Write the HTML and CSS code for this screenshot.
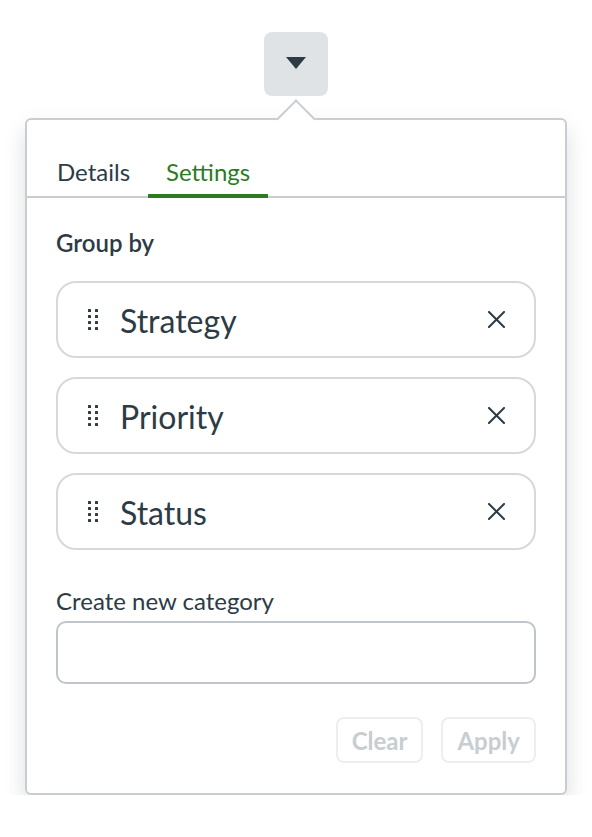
FILE: index.html
```html
<!DOCTYPE html>
<html lang="en">
<head>
<meta charset="utf-8">
<title>Group by settings</title>
<link rel="stylesheet" href="styles.css">
</head>
<body>
<div class="stage">
  <button class="trigger" type="button" aria-label="Toggle">
    <svg width="20" height="12" viewBox="0 0 20 12"><path d="M0 0 H20 L10 12 Z" fill="#2d3b45"/></svg>
  </button>
  <div class="popover">
    <span class="caret"></span>
    <div class="tablist">
      <div class="tab">Details</div>
      <div class="tab active">Settings</div>
    </div>
    <div class="panel">
      <div class="label strong">Group by</div>
      <div class="chips">
        <div class="chip">
          <svg class="handle" width="10" height="21" viewBox="0 0 10 21"><g fill="#2d3b45"><rect x="0" y="0" width="3" height="3" rx="0.6"/><rect x="7" y="0" width="3" height="3" rx="0.6"/><rect x="0" y="6" width="3" height="3" rx="0.6"/><rect x="7" y="6" width="3" height="3" rx="0.6"/><rect x="0" y="12" width="3" height="3" rx="0.6"/><rect x="7" y="12" width="3" height="3" rx="0.6"/><rect x="0" y="18" width="3" height="3" rx="0.6"/><rect x="7" y="18" width="3" height="3" rx="0.6"/></g></svg>
          <span class="chip-text">Strategy</span>
          <svg class="close" width="17" height="17" viewBox="0 0 17 17"><path d="M1 1 L16 16 M16 1 L1 16" stroke="#2d3b45" stroke-width="2" stroke-linecap="square"/></svg>
        </div>
        <div class="chip">
          <svg class="handle" width="10" height="21" viewBox="0 0 10 21"><g fill="#2d3b45"><rect x="0" y="0" width="3" height="3" rx="0.6"/><rect x="7" y="0" width="3" height="3" rx="0.6"/><rect x="0" y="6" width="3" height="3" rx="0.6"/><rect x="7" y="6" width="3" height="3" rx="0.6"/><rect x="0" y="12" width="3" height="3" rx="0.6"/><rect x="7" y="12" width="3" height="3" rx="0.6"/><rect x="0" y="18" width="3" height="3" rx="0.6"/><rect x="7" y="18" width="3" height="3" rx="0.6"/></g></svg>
          <span class="chip-text">Priority</span>
          <svg class="close" width="17" height="17" viewBox="0 0 17 17"><path d="M1 1 L16 16 M16 1 L1 16" stroke="#2d3b45" stroke-width="2" stroke-linecap="square"/></svg>
        </div>
        <div class="chip">
          <svg class="handle" width="10" height="21" viewBox="0 0 10 21"><g fill="#2d3b45"><rect x="0" y="0" width="3" height="3" rx="0.6"/><rect x="7" y="0" width="3" height="3" rx="0.6"/><rect x="0" y="6" width="3" height="3" rx="0.6"/><rect x="7" y="6" width="3" height="3" rx="0.6"/><rect x="0" y="12" width="3" height="3" rx="0.6"/><rect x="7" y="12" width="3" height="3" rx="0.6"/><rect x="0" y="18" width="3" height="3" rx="0.6"/><rect x="7" y="18" width="3" height="3" rx="0.6"/></g></svg>
          <span class="chip-text">Status</span>
          <svg class="close" width="17" height="17" viewBox="0 0 17 17"><path d="M1 1 L16 16 M16 1 L1 16" stroke="#2d3b45" stroke-width="2" stroke-linecap="square"/></svg>
        </div>
      </div>
      <label class="label field-label" for="newcat">Create new category</label>
      <input class="input" id="newcat" type="text">
      <div class="actions">
        <button class="btn" type="button" disabled>Clear</button>
        <button class="btn" type="button" disabled>Apply</button>
      </div>
    </div>
  </div>
</div>
</body>
</html>
```

FILE: styles.css
```css
* { box-sizing: border-box; }

html, body {
  margin: 0;
  padding: 0;
  background: #ffffff;
}

body {
  font-family: Lato, "Open Sans", "Liberation Sans", sans-serif;
  color: #2d3b45;
}

.stage {
  display: flex;
  flex-direction: column;
  align-items: center;
  padding-top: 32px;
}

.trigger {
  width: 64px;
  height: 64px;
  border: none;
  border-radius: 8px;
  background: #e0e3e6;
  display: flex;
  align-items: center;
  justify-content: center;
  padding: 0;
  padding-bottom: 2px;
}

.popover {
  position: relative;
  margin-top: 22px;
  width: 542px;
  background: #fff;
  border: 2px solid #c7cdd1;
  border-radius: 6px;
  box-shadow: 0 8px 24px rgba(0, 0, 0, 0.09), 0 16px 22px rgba(0, 0, 0, 0.05);
}

.caret {
  position: absolute;
  left: 50%;
  top: -15px;
  width: 28px;
  height: 28px;
  margin-left: -14px;
  background: #fff;
  border-top: 2px solid #c7cdd1;
  border-left: 2px solid #c7cdd1;
  transform: rotate(45deg);
}

.tablist {
  position: relative;
  display: flex;
  padding: 35px 12px 0;
  border-bottom: 2px solid #c7cdd1;
}

.tab {
  position: relative;
  padding: 0 18px 10px;
  margin-bottom: -2px;
  font-size: 24px;
  line-height: 33px;
  color: #2d3b45;
}

.tab.active {
  color: #2c7c1f;
}

.tab.active::after {
  content: "";
  position: absolute;
  left: 0;
  right: 0;
  bottom: 0;
  height: 4px;
  background: #2c7c1f;
}

.panel {
  padding: 28px 29px 30px;
  display: flex;
  flex-direction: column;
}

.label {
  font-size: 24px;
  line-height: 33px;
}

.strong {
  font-weight: 600;
}

.chips {
  display: flex;
  flex-direction: column;
  gap: 19px;
  margin-top: 22px;
}

.chip {
  display: flex;
  align-items: center;
  height: 77px;
  border: 2px solid #d5d9dc;
  border-radius: 20px;
  padding: 0 29px 0 30px;
}

.handle {
  flex: none;
  margin-right: 22px;
}

.chip-text {
  flex: 1;
  font-size: 32px;
  line-height: 40px;
  padding-top: 2px;
}

.close {
  flex: none;
}

.field-label {
  margin-top: 34px;
}

.input {
  margin-top: 4px;
  height: 63px;
  border: 2px solid #bfc5ca;
  border-radius: 10px;
  font: inherit;
  font-size: 24px;
  padding: 0 16px;
  outline: none;
}

.actions {
  display: flex;
  justify-content: flex-end;
  gap: 18px;
  margin-top: 33px;
}

.btn {
  height: 46px;
  padding: 0 14px;
  border: 2px solid #eceef0;
  border-radius: 8px;
  background: #fff;
  font-family: Lato, "Open Sans", "Liberation Sans", sans-serif;
  font-size: 24px;
  font-weight: 700;
  color: #c7cdd1;
}
```
